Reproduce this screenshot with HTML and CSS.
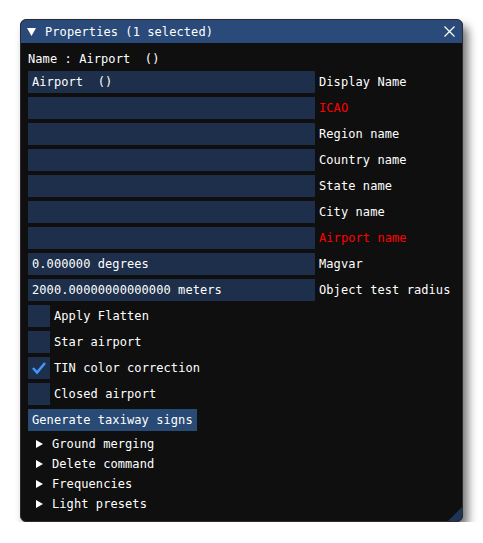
FILE: index.html
```html
<!DOCTYPE html>
<html>
<head>
<meta charset="utf-8">
<link rel="stylesheet" href="styles.css">
</head>
<body>
<div class="window">
  <div class="titlebar">
    <svg class="collapse" width="9" height="8" viewBox="0 0 9 8"><polygon points="0,0 9,0 4.5,8" fill="#fff"/></svg>
    <span class="title">Properties (1 selected)</span>
    <svg class="close" width="11" height="11" viewBox="0 0 11 11"><path d="M0.5 0.5 L10.5 10.5 M10.5 0.5 L0.5 10.5" stroke="#fff" stroke-width="1.2" fill="none"/></svg>
  </div>
  <div class="content">
    <div class="text">Name : Airport  ()</div>
    <div class="row"><div class="input">Airport  ()</div><span class="label">Display Name</span></div>
    <div class="row"><div class="input"></div><span class="label red">ICAO</span></div>
    <div class="row"><div class="input"></div><span class="label">Region name</span></div>
    <div class="row"><div class="input"></div><span class="label">Country name</span></div>
    <div class="row"><div class="input"></div><span class="label">State name</span></div>
    <div class="row"><div class="input"></div><span class="label">City name</span></div>
    <div class="row"><div class="input"></div><span class="label red">Airport name</span></div>
    <div class="row"><div class="input">0.000000 degrees</div><span class="label">Magvar</span></div>
    <div class="row"><div class="input">2000.00000000000000 meters</div><span class="label">Object test radius</span></div>
    <div class="row"><div class="check"></div><span class="clabel">Apply Flatten</span></div>
    <div class="row"><div class="check"></div><span class="clabel">Star airport</span></div>
    <div class="row"><div class="check"><svg width="22" height="22" viewBox="0 0 22 22"><polyline points="5,11 9,15.5 17,6" stroke="#4296fa" stroke-width="2.6" fill="none" stroke-linecap="butt" stroke-linejoin="miter"/></svg></div><span class="clabel">TIN color correction</span></div>
    <div class="row"><div class="check"></div><span class="clabel">Closed airport</span></div>
    <div class="row"><div class="button">Generate taxiway signs</div></div>
    <div class="tree">
      <div class="node"><svg class="arrow" width="7" height="8" viewBox="0 0 7 8"><polygon points="0,0 7,4 0,8" fill="#fff"/></svg><span>Ground merging</span></div>
      <div class="node"><svg class="arrow" width="7" height="8" viewBox="0 0 7 8"><polygon points="0,0 7,4 0,8" fill="#fff"/></svg><span>Delete command</span></div>
      <div class="node"><svg class="arrow" width="7" height="8" viewBox="0 0 7 8"><polygon points="0,0 7,4 0,8" fill="#fff"/></svg><span>Frequencies</span></div>
      <div class="node"><svg class="arrow" width="7" height="8" viewBox="0 0 7 8"><polygon points="0,0 7,4 0,8" fill="#fff"/></svg><span>Light presets</span></div>
    </div>
  </div>
  <div class="grip"></div>
</div>
</body>
</html>
```
FILE: styles.css
```css
html, body {
  margin: 0;
  padding: 0;
  background: #ffffff;
}
body {
  font-family: "DejaVu Sans Mono", "Liberation Mono", monospace;
  font-size: 12px;
  letter-spacing: 0.08px;
  color: #ffffff;
}
.window {
  position: relative;
  margin: 19px 0 0 20px;
  width: 443px;
  height: 503px;
  background: #0f0f0f;
  border-radius: 6px;
  box-shadow: 5px 7px 10px rgba(0, 0, 0, 0.55);
  overflow: hidden;
  box-sizing: border-box;
  border: 1px solid #2b2b30;
}
.titlebar {
  height: 23px;
  background: #2a4a7a;
  display: flex;
  align-items: center;
  padding: 1px 0 0 7px;
  margin: -1px -1px 0 -1px;
}
.collapse {
  margin-right: 9px;
  flex: none;
}
.title {
  flex: 1;
  white-space: pre;
  line-height: 16px;
}
.close {
  margin-right: 8px;
  flex: none;
}
.content {
  padding: 8px 8px 0 7px;
  display: flex;
  flex-direction: column;
  gap: 4px;
}
.text {
  line-height: 16px;
  white-space: pre;
}
.row {
  display: flex;
  align-items: center;
  height: 22px;
}
.input {
  width: 287px;
  height: 22px;
  box-sizing: border-box;
  background: #1d2f4a;
  padding: 0 4px;
  line-height: 22px;
  white-space: pre;
  flex: none;
}
.label {
  margin-left: 4px;
  white-space: pre;
}
.red {
  color: #ff0000;
}
.check {
  width: 22px;
  height: 22px;
  background: #1d2f4a;
  flex: none;
}
.check svg {
  display: block;
}
.clabel {
  margin-left: 4px;
}
.button {
  height: 22px;
  line-height: 22px;
  padding: 0 4px;
  background: #284a75;
  white-space: pre;
}
.tree {
  display: flex;
  flex-direction: column;
  gap: 4px;
  padding-top: 1px;
}
.node {
  display: flex;
  align-items: center;
  height: 16px;
  padding-left: 8px;
}
.arrow {
  margin-right: 9px;
  flex: none;
}
.grip {
  position: absolute;
  right: 0;
  bottom: 0;
  width: 0;
  height: 0;
  border-style: solid;
  border-width: 0 0 14px 14px;
  border-color: transparent transparent #1c3557 transparent;
}
```
